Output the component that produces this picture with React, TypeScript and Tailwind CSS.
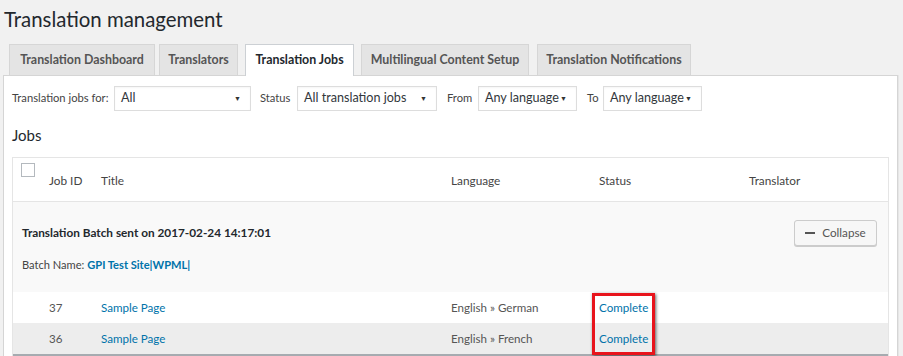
import React from 'react';

const font = { fontFamily: 'Lato, "Open Sans", sans-serif' };

const TABS = [
  { label: 'Translation Dashboard', w: 'w-[146px]', ml: 'ml-[9px]' },
  { label: 'Translators', w: 'w-[79px]', ml: 'ml-[4px]' },
  { label: 'Translation Jobs', w: 'w-[109px]', ml: 'ml-[7px]', active: true },
  { label: 'Multilingual Content Setup', w: 'w-[168px]', ml: 'ml-[7px]' },
  { label: 'Translation Notifications', w: 'w-[154px]', ml: 'ml-[8px]' },
];

function Select({ value, w }: { value: string; w: string }) {
  return (
    <div className={`flex h-[25px] ${w} items-center justify-between whitespace-nowrap border border-[#dddddd] bg-white pl-[6px] pr-[9px] text-[12.6px] text-[#32373c] shadow-[inset_0_1px_2px_rgba(0,0,0,0.04)]`}>
      <span>{value}</span>
      <span className="text-[7px] text-[#333]">▼</span>
    </div>
  );
}

const JOBS = [
  { id: 37, title: 'Sample Page', lang: 'English » German', bg: 'bg-white' },
  { id: 36, title: 'Sample Page', lang: 'English » French', bg: 'bg-[#ededed]' },
];

export default function App() {
  return (
    <div className="h-[356px] w-[903px] overflow-hidden bg-[#f1f1f1] text-[#444]" style={font}>
      <h1 className="pl-[4px] pt-[4px] text-[20.4px] leading-[30px] font-normal text-[#23282d]">Translation management</h1>

      <div className="mt-[10px] flex h-[31px] items-end">
        {TABS.map((tab) => (
          <div
            key={tab.label}
            className={`${tab.w} ${tab.ml} flex items-center justify-center whitespace-nowrap border border-b-0 text-[12.4px] font-bold text-[#555] ${
              tab.active ? 'relative z-10 h-[32px] -mb-px border-[#ccd0d4] bg-white text-[#23282d]' : 'h-[31px] border-[#d6d6d6] bg-[#e4e4e4]'
            }`}
          >
            {tab.label}
          </div>
        ))}
      </div>

      <div className="ml-[3px] w-[895px] border border-[#d5d5d5] bg-white pb-[40px] shadow-[1px_0_0_#e6e6e6]">
        <div className="flex items-center whitespace-nowrap pl-[8px] pt-[10px] text-[11.2px]">
          <span className="w-[102px]">Translation jobs for:</span>
          <Select value="All" w="w-[137px]" />
          <span className="w-[46px] pl-[9px]">Status</span>
          <Select value="All translation jobs" w="w-[140px]" />
          <span className="w-[41px] pl-[10px]">From</span>
          <Select value="Any language" w="w-[99px]" />
          <span className="w-[26px] pl-[10px]">To</span>
          <Select value="Any language" w="w-[99px]" />
        </div>

        <h2 className="pl-[8px] pt-[12px] text-[15px] leading-[24px] font-normal text-[#23282d]">Jobs</h2>

        <div className="relative ml-[8px] mt-[10px] w-[877px] border border-b-0 border-[#e5e5e5] text-[11.8px]">
          <div className="grid h-[44px] grid-cols-[36px_52px_350px_148px_150px_1fr] border-b border-[#e5e5e5]">
            <div className="pl-[8px] pt-[5px]">
              <div className="h-[14px] w-[14px] border border-[#b4b9be] bg-white" />
            </div>
            <div className="pt-[14px]">Job ID</div>
            <div className="pt-[14px]">Title</div>
            <div className="pt-[14px]">Language</div>
            <div className="pt-[14px]">Status</div>
            <div className="pt-[14px]">Translator</div>
          </div>

          <div className="flex h-[90px] flex-col bg-[#f9f9f9] pl-[9px] pr-[11px]">
            <div className="mt-[18px] flex items-center justify-between">
              <span className="font-bold text-[#23282d]">Translation Batch sent on 2017-02-24 14:17:01</span>
              <button className="flex h-[26px] w-[83px] items-center justify-center gap-[7px] rounded-[3px] border border-[#cccccc] bg-[#f7f7f7] text-[11.7px] text-[#555] shadow-[0_1px_0_#ccc]">
                <span className="h-[2px] w-[10px] bg-[#555]" />
                Collapse
              </button>
            </div>
            <div className="mt-[11px] text-[11.1px]">
              Batch Name: <span className="font-bold text-[#0073aa]">GPI Test Site|WPML|</span>
            </div>
          </div>

          {JOBS.map((job) => (
            <div key={job.id} className={`grid h-[31px] grid-cols-[36px_52px_350px_148px_150px_1fr] items-center text-[11.6px] ${job.bg}`}>
              <div />
              <div className="text-[#555]">{job.id}</div>
              <div className="text-[#0073aa]">{job.title}</div>
              <div className="text-[#555]">{job.lang}</div>
              <div className="text-[#0073aa]">Complete</div>
              <div />
            </div>
          ))}
          <div className="h-[3px] bg-[#a6abb0]" />

          <div className="absolute left-[579px] top-[135px] h-[62px] w-[63px] border-[3px] border-[#e8141c] shadow-[1px_1px_3px_rgba(0,0,0,0.6)]" />
        </div>
      </div>
    </div>
  );
}
